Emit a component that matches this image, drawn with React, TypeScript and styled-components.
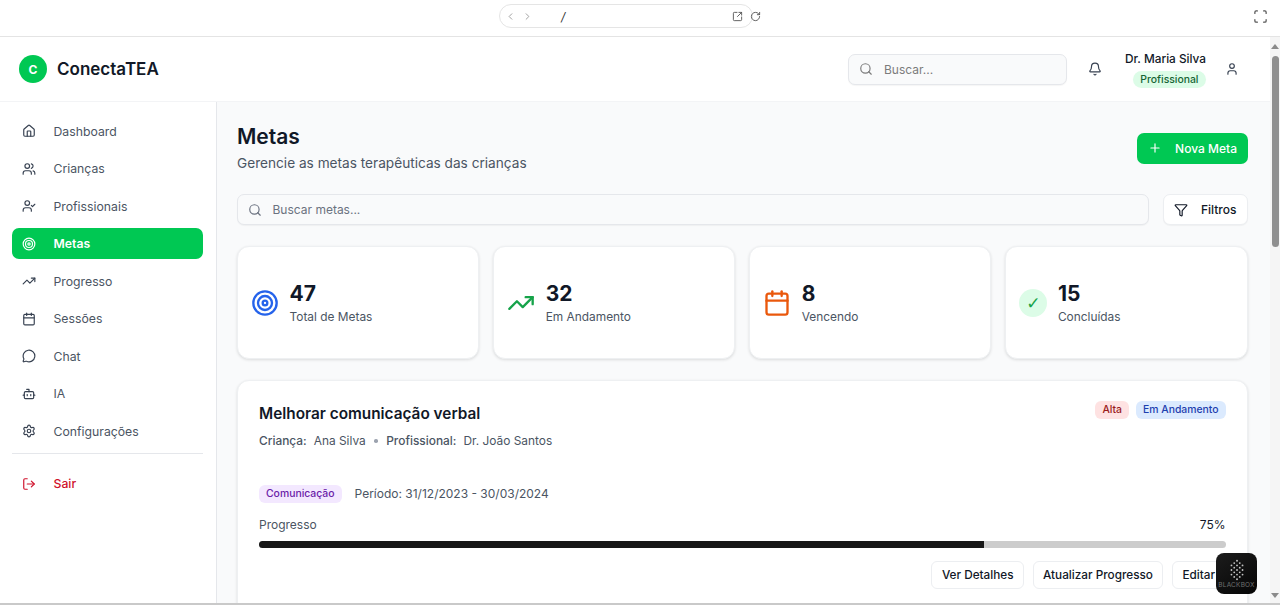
import React from 'react';
import styled, { createGlobalStyle } from 'styled-components';
import {
  Bell,
  Bot,
  Calendar,
  ChevronLeft,
  ChevronRight,
  Funnel,
  House,
  LogOut,
  MessageCircle,
  Plus,
  RotateCw,
  Scan,
  Search,
  Settings,
  SquareArrowOutUpRight,
  Target,
  TrendingUp,
  User,
  UserCheck,
  Users
} from 'lucide-react';

const navItems = [
  { label: 'Dashboard', icon: House },
  { label: 'Crianças', icon: Users },
  { label: 'Profissionais', icon: UserCheck },
  { label: 'Metas', icon: Target, active: true },
  { label: 'Progresso', icon: TrendingUp },
  { label: 'Sessões', icon: Calendar },
  { label: 'Chat', icon: MessageCircle },
  { label: 'IA', icon: Bot },
  { label: 'Configurações', icon: Settings }
];

const dots = [
  [12, 3], [9, 5.5], [15, 5.5], [6, 8], [12, 8], [18, 8], [9, 10.5], [15, 10.5], [6, 13], [12, 13],
  [18, 13], [9, 15.5], [15, 15.5], [6, 18], [12, 18], [18, 18], [9, 20.5], [15, 20.5], [12, 23]
];

const App: React.FC = () => (
  <Page>
    <GlobalStyle />
    <BrowserBar>
      <AddressBar>
        <AddressNav>
          <ChevronLeft size={11} />
          <ChevronRight size={11} />
        </AddressNav>
        <AddressPath>/</AddressPath>
        <AddressActions>
          <SquareArrowOutUpRight size={11} />
          <RotateCw size={11} />
        </AddressActions>
      </AddressBar>
      <FullscreenIcon>
        <Scan size={15} />
      </FullscreenIcon>
    </BrowserBar>
    <Viewport>
      <Site>
        <Header>
          <Brand>
            <BrandMark>C</BrandMark>
            <BrandName>ConectaTEA</BrandName>
          </Brand>
          <HeaderRight>
            <HeaderSearch>
              <Search size={14} />
              <span>Buscar...</span>
            </HeaderSearch>
            <HeaderIcon>
              <Bell size={14} />
            </HeaderIcon>
            <UserBlock>
              <UserName>Dr. Maria Silva</UserName>
              <RoleBadge>Profissional</RoleBadge>
            </UserBlock>
            <HeaderIcon>
              <User size={14} />
            </HeaderIcon>
          </HeaderRight>
        </Header>
        <Body>
          <Sidebar>
            <NavList>
              {navItems.map(({ label, icon: Icon, active }) => (
                <NavItem key={label} $active={active}>
                  <Icon size={14} />
                  {label}
                </NavItem>
              ))}
            </NavList>
            <SideDivider />
            <NavItem $danger>
              <LogOut size={14} />
              Sair
            </NavItem>
          </Sidebar>
          <Main>
            <TitleRow>
              <div>
                <PageTitle>Metas</PageTitle>
                <PageSubtitle>Gerencie as metas terapêuticas das crianças</PageSubtitle>
              </div>
              <PrimaryButton>
                <Plus size={14} />
                Nova Meta
              </PrimaryButton>
            </TitleRow>
            <FilterRow>
              <MainSearch>
                <Search size={14} />
                <span>Buscar metas...</span>
              </MainSearch>
              <FilterButton>
                <Funnel size={14} />
                Filtros
              </FilterButton>
            </FilterRow>
            <StatGrid>
              <StatCard>
                <StatIcon $color="#2563eb">
                  <Target size={28} strokeWidth={2} />
                </StatIcon>
                <div>
                  <StatValue>47</StatValue>
                  <StatLabel>Total de Metas</StatLabel>
                </div>
              </StatCard>
              <StatCard>
                <StatIcon $color="#16a34a">
                  <TrendingUp size={28} strokeWidth={2} />
                </StatIcon>
                <div>
                  <StatValue>32</StatValue>
                  <StatLabel>Em Andamento</StatLabel>
                </div>
              </StatCard>
              <StatCard>
                <StatIcon $color="#ea580c">
                  <Calendar size={28} strokeWidth={2} />
                </StatIcon>
                <div>
                  <StatValue>8</StatValue>
                  <StatLabel>Vencendo</StatLabel>
                </div>
              </StatCard>
              <StatCard>
                <CheckCircle>✓</CheckCircle>
                <div>
                  <StatValue>15</StatValue>
                  <StatLabel>Concluídas</StatLabel>
                </div>
              </StatCard>
            </StatGrid>
            <GoalCard>
              <GoalHead>
                <div>
                  <GoalTitle>Melhorar comunicação verbal</GoalTitle>
                  <GoalMeta>
                    <strong>Criança:</strong> Ana Silva
                    <Dot />
                    <strong>Profissional:</strong> Dr. João Santos
                  </GoalMeta>
                </div>
                <BadgeGroup>
                  <Badge $bg="#fee2e2" $fg="#991b1b">Alta</Badge>
                  <Badge $bg="#dbeafe" $fg="#1e40af">Em Andamento</Badge>
                </BadgeGroup>
              </GoalHead>
              <TagRow>
                <Badge $bg="#f3e8ff" $fg="#6b21a8">Comunicação</Badge>
                <Period>Período: 31/12/2023 - 30/03/2024</Period>
              </TagRow>
              <ProgressHead>
                <span>Progresso</span>
                <ProgressValue>75%</ProgressValue>
              </ProgressHead>
              <ProgressTrack>
                <ProgressFill style={{ width: '75%' }} />
              </ProgressTrack>
              <GoalActions>
                <OutlineButton>Ver Detalhes</OutlineButton>
                <OutlineButton>Atualizar Progresso</OutlineButton>
                <OutlineButton>Editar</OutlineButton>
              </GoalActions>
            </GoalCard>
          </Main>
        </Body>
      </Site>
      <Scrollbar>
        <ArrowUp />
        <ScrollThumb />
        <ScrollSpacer />
        <ArrowDown />
      </Scrollbar>
    </Viewport>
    <Widget>
      <svg width="24" height="24" viewBox="0 0 24 26">
        {dots.map(([x, y]) => (
          <circle key={`${x}-${y}`} cx={x} cy={y} r="1" fill="#c4c4c4" />
        ))}
      </svg>
      <WidgetLabel>BLACKBOX</WidgetLabel>
    </Widget>
  </Page>
);

const GlobalStyle = createGlobalStyle`
  html, body {
    margin: 0;
    height: 100%;
    overflow: hidden;
    background: #ffffff;
    font-family: Inter, "Liberation Sans", sans-serif;
  }
  * {
    box-sizing: border-box;
  }
`;

const Page = styled.div`
  position: relative;
  display: flex;
  flex-direction: column;
  width: 1280px;
  height: 605px;
  overflow: hidden;
  border-bottom: 2px solid #c9c9c9;
`;

const BrowserBar = styled.div`
  position: relative;
  flex: none;
  display: flex;
  justify-content: center;
  height: 37px;
  padding: 4px 36px 0 0;
  background: #ffffff;
  border-bottom: 1px solid #e4e4e4;
`;

const AddressBar = styled.div`
  display: flex;
  align-items: center;
  width: 254px;
  height: 24px;
  padding: 0 0 0 5px;
  margin-left: 8px;
  border: 1px solid #e5e5e5;
  border-radius: 12px;
  color: #9a9a9a;
`;

const AddressNav = styled.div`
  display: flex;
  gap: 6px;
`;

const AddressPath = styled.span`
  margin-left: 28px;
  font-size: 12px;
  color: #333333;
  font-style: italic;
`;

const AddressActions = styled.div`
  display: flex;
  gap: 7px;
  margin-left: auto;
  margin-right: -9px;
  color: #555555;
`;

const FullscreenIcon = styled.div`
  position: absolute;
  top: 8px;
  right: 12px;
  color: #555555;
`;

const Viewport = styled.div`
  flex: 1;
  display: flex;
  min-height: 0;
`;

const Site = styled.div`
  flex: 1;
  display: flex;
  flex-direction: column;
  min-width: 0;
`;

const Header = styled.header`
  flex: none;
  display: flex;
  align-items: center;
  justify-content: space-between;
  height: 65px;
  padding: 0 31px 0 19px;
  background: #ffffff;
  border-bottom: 1px solid #f3f4f6;
`;

const Brand = styled.div`
  display: flex;
  align-items: center;
  gap: 10px;
`;

const BrandMark = styled.div`
  display: flex;
  align-items: center;
  justify-content: center;
  width: 28px;
  height: 28px;
  border-radius: 50%;
  background: #00c853;
  color: #ffffff;
  font-size: 12px;
  font-weight: 700;
`;

const BrandName = styled.span`
  font-size: 17px;
  font-weight: 600;
  color: #111827;
`;

const HeaderRight = styled.div`
  display: flex;
  align-items: center;
`;

const HeaderSearch = styled.div`
  display: flex;
  align-items: center;
  gap: 11px;
  width: 219px;
  height: 31px;
  padding: 0 10px;
  margin-right: 21px;
  background: #f9fafb;
  border: 1px solid #e5e7eb;
  border-radius: 7px;
  box-shadow: 0 1px 1px rgba(0, 0, 0, 0.04);
  color: #7c7c7c;
  font-size: 12px;
`;

const HeaderIcon = styled.div`
  display: flex;
  color: #374151;
`;

const UserBlock = styled.div`
  display: flex;
  flex-direction: column;
  align-items: flex-end;
  gap: 4px;
  margin: 1px 19px 0 23px;
`;

const UserName = styled.span`
  font-size: 11.8px;
  line-height: 15px;
  font-weight: 500;
  color: #111827;
`;

const RoleBadge = styled.span`
  padding: 1px 7.5px;
  border-radius: 9px;
  background: #dcfce7;
  color: #166534;
  font-size: 10.4px;
  line-height: 15px;
  font-weight: 500;
`;

const Body = styled.div`
  flex: 1;
  display: flex;
  min-height: 0;
`;

const Sidebar = styled.aside`
  flex: none;
  width: 217px;
  padding: 13.5px 13px 0 12px;
  background: #ffffff;
  border-right: 1px solid #e5e7eb;
`;

const NavList = styled.nav`
  display: flex;
  flex-direction: column;
  gap: 6.5px;
`;

const NavItem = styled.div<{ $active?: boolean; $danger?: boolean }>`
  display: flex;
  align-items: center;
  gap: 17.5px;
  height: 31px;
  padding: 0 10px;
  border-radius: 7px;
  font-size: 12.25px;
  font-weight: ${({ $active, $danger }) => ($active ? 600 : $danger ? 500 : 400)};
  background: ${({ $active }) => ($active ? '#00c853' : 'transparent')};
  color: ${({ $active, $danger }) => ($active ? '#ffffff' : $danger ? '#d0112b' : '#4b5563')};

  svg {
    flex: none;
    color: ${({ $active, $danger }) => ($active ? '#ffffff' : $danger ? '#d0112b' : '#374151')};
  }
`;

const SideDivider = styled.div`
  height: 1px;
  margin: 6.5px 0 14px;
  background: #e5e7eb;
`;

const Main = styled.main`
  flex: 1;
  min-width: 0;
  padding: 22px 22.5px 0 20px;
  background: #f9fafb;
  overflow: hidden;
`;

const TitleRow = styled.div`
  display: flex;
  align-items: center;
  justify-content: space-between;
  margin-bottom: 20px;
`;

const PageTitle = styled.h1`
  margin: 0;
  font-size: 21px;
  line-height: 26px;
  font-weight: 600;
  color: #111827;
`;

const PageSubtitle = styled.p`
  margin: 3px 0 0;
  font-size: 13.65px;
  line-height: 21px;
  color: #4b5563;
`;

const PrimaryButton = styled.button`
  display: flex;
  align-items: center;
  gap: 13.5px;
  height: 31px;
  margin-bottom: 2px;
  padding: 0 10.5px;
  border: 0;
  border-radius: 7px;
  background: #00c853;
  color: #ffffff;
  font-family: inherit;
  font-size: 12px;
  font-weight: 500;
`;

const FilterRow = styled.div`
  display: flex;
  gap: 14px;
  margin-bottom: 21px;
`;

const MainSearch = styled.div`
  flex: 1;
  display: flex;
  align-items: center;
  gap: 10.5px;
  height: 31px;
  padding: 0 10px;
  background: #f9fafb;
  border: 1px solid #e5e7eb;
  border-radius: 7px;
  box-shadow: 0 1px 1px rgba(0, 0, 0, 0.04);
  color: #6b7280;
  font-size: 12px;
`;

const FilterButton = styled.button`
  display: flex;
  align-items: center;
  gap: 13px;
  height: 31px;
  padding: 0 10px;
  background: #ffffff;
  border: 1px solid #eceef1;
  border-radius: 7px;
  box-shadow: 0 1px 1px rgba(0, 0, 0, 0.04);
  color: #111827;
  font-family: inherit;
  font-size: 12px;
  font-weight: 500;
`;

const StatGrid = styled.div`
  display: grid;
  grid-template-columns: repeat(4, 1fr);
  gap: 14px;
  margin-bottom: 21px;
`;

const StatCard = styled.div`
  display: flex;
  align-items: center;
  gap: 10.5px;
  height: 113px;
  padding: 0 13px;
  background: #ffffff;
  border: 1px solid #eef0f2;
  border-radius: 12px;
  box-shadow: 0 1px 3px rgba(0, 0, 0, 0.12);
`;

const StatIcon = styled.div<{ $color: string }>`
  display: flex;
  color: ${({ $color }) => $color};
`;

const CheckCircle = styled.div`
  display: flex;
  align-items: center;
  justify-content: center;
  width: 28px;
  height: 28px;
  border-radius: 50%;
  background: #dcfce7;
  color: #16a34a;
  font-family: "DejaVu Sans", sans-serif;
  font-size: 17px;
`;

const StatValue = styled.div`
  font-size: 21px;
  line-height: 28px;
  font-weight: 700;
  color: #111827;
`;

const StatLabel = styled.div`
  font-size: 11.9px;
  line-height: 18px;
  color: #4b5563;
`;

const GoalCard = styled.section`
  padding: 21px 21px 30px;
  background: #ffffff;
  border: 1px solid #eef0f2;
  border-radius: 12px;
  box-shadow: 0 1px 3px rgba(0, 0, 0, 0.12);
`;

const GoalHead = styled.div`
  display: flex;
  align-items: flex-start;
  justify-content: space-between;
  min-height: 83px;
`;

const GoalTitle = styled.h3`
  margin: 0 0 6px;
  font-size: 15.35px;
  line-height: 24px;
  font-weight: 600;
  color: #111827;
`;

const GoalMeta = styled.div`
  display: flex;
  align-items: center;
  gap: 7px;
  font-size: 11.9px;
  line-height: 18px;
  color: #4b5563;

  strong {
    font-weight: 500;
  }
`;

const Dot = styled.span`
  width: 3.5px;
  height: 3.5px;
  margin: 0 1.5px;
  border-radius: 50%;
  background: #9ca3af;
`;

const BadgeGroup = styled.div`
  display: flex;
  gap: 7px;
  margin-top: -1px;
`;

const Badge = styled.span<{ $bg: string; $fg: string }>`
  padding: 1px 7px;
  border-radius: 6px;
  background: ${({ $bg }) => $bg};
  color: ${({ $fg }) => $fg};
  font-size: 10.4px;
  line-height: 16px;
  font-weight: 500;
`;

const TagRow = styled.div`
  display: flex;
  align-items: center;
  gap: 13px;
  margin-bottom: 13px;
`;

const Period = styled.span`
  font-size: 12px;
  line-height: 18px;
  color: #4b5563;
`;

const ProgressHead = styled.div`
  display: flex;
  justify-content: space-between;
  margin-bottom: 7px;
  font-size: 12px;
  line-height: 18px;
  color: #4b5563;
`;

const ProgressValue = styled.span`
  color: #111827;
`;

const ProgressTrack = styled.div`
  height: 7px;
  border-radius: 4px;
  background: #cccccc;
  overflow: hidden;
`;

const ProgressFill = styled.div`
  height: 100%;
  background: #171717;
`;

const GoalActions = styled.div`
  display: flex;
  justify-content: flex-end;
  gap: 8.5px;
  margin-top: 13px;
`;

const OutlineButton = styled.button`
  height: 28px;
  padding: 0 9.5px;
  background: #ffffff;
  border: 1px solid #eceef1;
  border-radius: 6px;
  color: #111827;
  font-family: inherit;
  font-size: 11.75px;
  font-weight: 500;
`;

const Scrollbar = styled.div`
  flex: none;
  display: flex;
  flex-direction: column;
  align-items: center;
  width: 10px;
  padding: 7px 0 5px;
  background: #f5f5f5;
`;

const ArrowUp = styled.div`
  border: 4px solid transparent;
  border-top: 0;
  border-bottom: 5px solid #8a8a8a;
`;

const ArrowDown = styled.div`
  border: 4px solid transparent;
  border-bottom: 0;
  border-top: 5px solid #8a8a8a;
`;

const ScrollThumb = styled.div`
  width: 7px;
  height: 191px;
  margin-top: 7px;
  border-radius: 4px;
  background: #8f8f8f;
`;

const ScrollSpacer = styled.div`
  flex: 1;
`;

const Widget = styled.div`
  position: absolute;
  left: 1216px;
  top: 553px;
  display: flex;
  flex-direction: column;
  align-items: center;
  width: 41px;
  height: 41px;
  padding-top: 5px;
  border-radius: 8px;
  background: linear-gradient(145deg, #1c1c1c, #050505);
`;

const WidgetLabel = styled.span`
  font-size: 6.5px;
  line-height: 7px;
  letter-spacing: 0.2px;
  color: #6f6f6f;
`;

export default App;
